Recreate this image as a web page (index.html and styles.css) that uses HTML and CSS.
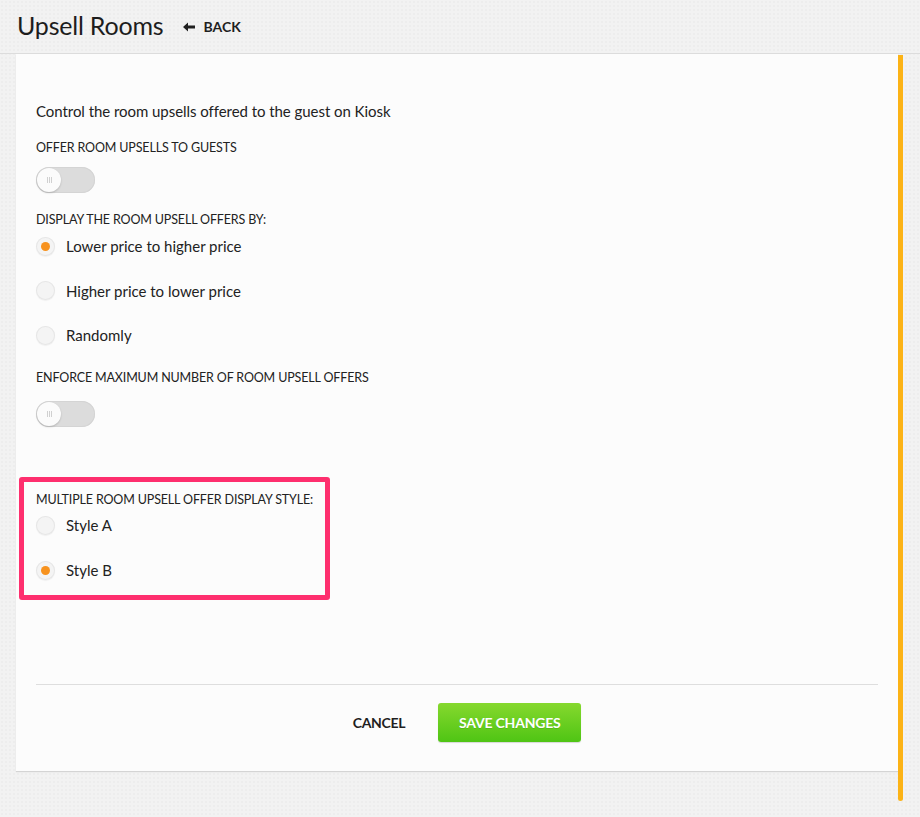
FILE: index.html
```html
<!DOCTYPE html>
<html lang="en">
<head>
<meta charset="utf-8">
<title>Upsell Rooms</title>
<link rel="stylesheet" href="styles.css">
</head>
<body>
<header class="topbar">
  <h1 class="title">Upsell Rooms</h1>
  <a class="back" href="#">
    <svg class="back-icon" width="12" height="10" viewBox="0 0 12 10"><path d="M0 5 L5 0.5 L5 3.6 L12 3.6 L12 6.4 L5 6.4 L5 9.5 Z" fill="#1f1f1f"/></svg>
    <span>BACK</span>
  </a>
</header>
<div class="scroll-indicator"></div>
<main class="card">
  <p class="intro">Control the room upsells offered to the guest on Kiosk</p>

  <div class="label l-offer">OFFER ROOM UPSELLS TO GUESTS</div>
  <div class="toggle t-offer"><span class="knob"><i></i><i></i><i></i></span></div>

  <div class="label l-display">DISPLAY THE ROOM UPSELL OFFERS BY:</div>
  <div class="radios">
    <div class="radio checked"><span class="dot"></span><span class="rtext">Lower price to higher price</span></div>
    <div class="radio"><span class="dot"></span><span class="rtext">Higher price to lower price</span></div>
    <div class="radio"><span class="dot"></span><span class="rtext">Randomly</span></div>
  </div>

  <div class="label l-enforce">ENFORCE MAXIMUM NUMBER OF ROOM UPSELL OFFERS</div>
  <div class="toggle t-enforce"><span class="knob"><i></i><i></i><i></i></span></div>

  <section class="styles-section">
    <div class="highlight"></div>
    <div class="label">MULTIPLE ROOM UPSELL OFFER DISPLAY STYLE:</div>
    <div class="radios r-style">
      <div class="radio"><span class="dot"></span><span class="rtext">Style A</span></div>
      <div class="radio checked"><span class="dot"></span><span class="rtext">Style B</span></div>
    </div>
  </section>

  <div class="divider"></div>
  <div class="actions">
    <button class="btn-cancel">CANCEL</button>
    <button class="btn-save">SAVE CHANGES</button>
  </div>
</main>
</body>
</html>
```

FILE: styles.css
```css
html, body {
  margin: 0;
  padding: 0;
}
body {
  background-color: #f2f2f2;
  background-image: radial-gradient(rgba(0,0,0,0.018) 1px, transparent 1px);
  background-size: 4px 4px;
  font-family: "Lato", "Liberation Sans", sans-serif;
  color: #222;
  height: 817px;
  position: relative;
  overflow: hidden;
}
.topbar {
  height: 54px;
  border-bottom: 1px solid #dcdcdc;
  display: flex;
  align-items: center;
  padding-left: 17px;
  box-sizing: border-box;
}
.title {
  margin: 0;
  font-weight: 400;
  font-size: 25px;
  color: #1d1d1d;
  letter-spacing: -0.2px;
  line-height: 30px;
  padding-bottom: 3px;
}
.back {
  display: flex;
  align-items: center;
  margin-left: 20px;
  text-decoration: none;
  color: #1f1f1f;
  font-size: 14px;
  font-weight: 700;
  letter-spacing: 0;
}
.back-icon {
  margin-right: 8px;
}
.scroll-indicator {
  position: absolute;
  left: 898px;
  top: 55px;
  width: 5px;
  height: 746px;
  background: #fcb316;
  border-radius: 0 0 3px 3px;
}
.card {
  width: 882px;
  margin-left: 16px;
  background: #fcfcfc;
  box-sizing: border-box;
  padding: 47px 20px 29px 20px;
  box-shadow: 0 1px 1px rgba(0,0,0,0.12);
  height: 717px;
}
.intro {
  margin: 0;
  font-size: 15px;
  line-height: 20px;
  color: #222;
  letter-spacing: -0.05px;
}
.label {
  font-size: 12.5px;
  line-height: 18px;
  color: #222;
  letter-spacing: -0.15px;
}
.l-offer { margin-top: 18px; }
.l-display { margin-top: 18px; }
.l-enforce { margin-top: 22px; }
.toggle {
  width: 59px;
  height: 26px;
  border-radius: 13px;
  background: #dcdcdc;
  position: relative;
  box-shadow: inset 0 0 0 1px #d4d4d4;
}
.t-offer { margin-top: 10px; }
.t-enforce { margin-top: 14px; }
.knob {
  position: absolute;
  left: 1px;
  top: 1px;
  width: 24px;
  height: 24px;
  border-radius: 50%;
  background: #fbfbfb;
  box-shadow: 0 1px 2px rgba(0,0,0,0.18);
  display: flex;
  align-items: center;
  justify-content: center;
  gap: 1px;
}
.knob i {
  display: block;
  width: 1px;
  height: 6px;
  background: #d0d0d0;
}
.radios {
  display: flex;
  flex-direction: column;
  gap: 20.5px;
  margin-top: 5px;
}
.radio {
  display: flex;
  align-items: center;
  height: 24px;
}
.dot {
  width: 19px;
  height: 19px;
  border-radius: 50%;
  background: #f4f4f4;
  box-shadow: inset 0 0 0 1px #e6e6e6, 0 1px 1px rgba(0,0,0,0.05);
  position: relative;
  flex: none;
}
.radio.checked .dot::after {
  content: "";
  position: absolute;
  left: 5px;
  top: 5px;
  width: 9px;
  height: 9px;
  border-radius: 50%;
  background: #f7921e;
}
.rtext {
  margin-left: 11px;
  font-size: 15px;
  color: #222;
}
.styles-section {
  position: relative;
  margin-top: 64px;
}
.r-style {
  gap: 21px;
  margin-top: 4px;
}
.highlight {
  position: absolute;
  left: -17px;
  top: -14px;
  width: 311px;
  height: 123px;
  box-sizing: border-box;
  border: 5px solid #fe2f6e;
  border-radius: 3px;
  pointer-events: none;
}
.divider {
  margin-top: 102px;
  height: 1px;
  background: #dedede;
}
.actions {
  margin-top: 18px;
  padding-left: 20px;
  display: flex;
  justify-content: center;
  align-items: center;
  gap: 33px;
}
.btn-cancel {
  background: none;
  border: none;
  font-family: inherit;
  font-size: 14px;
  font-weight: 700;
  color: #1f1f1f;
  letter-spacing: -0.3px;
  padding: 0;
}
.btn-save {
  width: 143px;
  height: 39px;
  border: none;
  border-radius: 3px;
  background: linear-gradient(#86d82e, #4fc514);
  color: #fff;
  font-family: inherit;
  font-size: 14px;
  font-weight: 700;
  letter-spacing: -0.2px;
  box-shadow: 0 1px 1px rgba(0,0,0,0.15);
  text-shadow: 0 1px 0 rgba(0,0,0,0.1);
}
```
